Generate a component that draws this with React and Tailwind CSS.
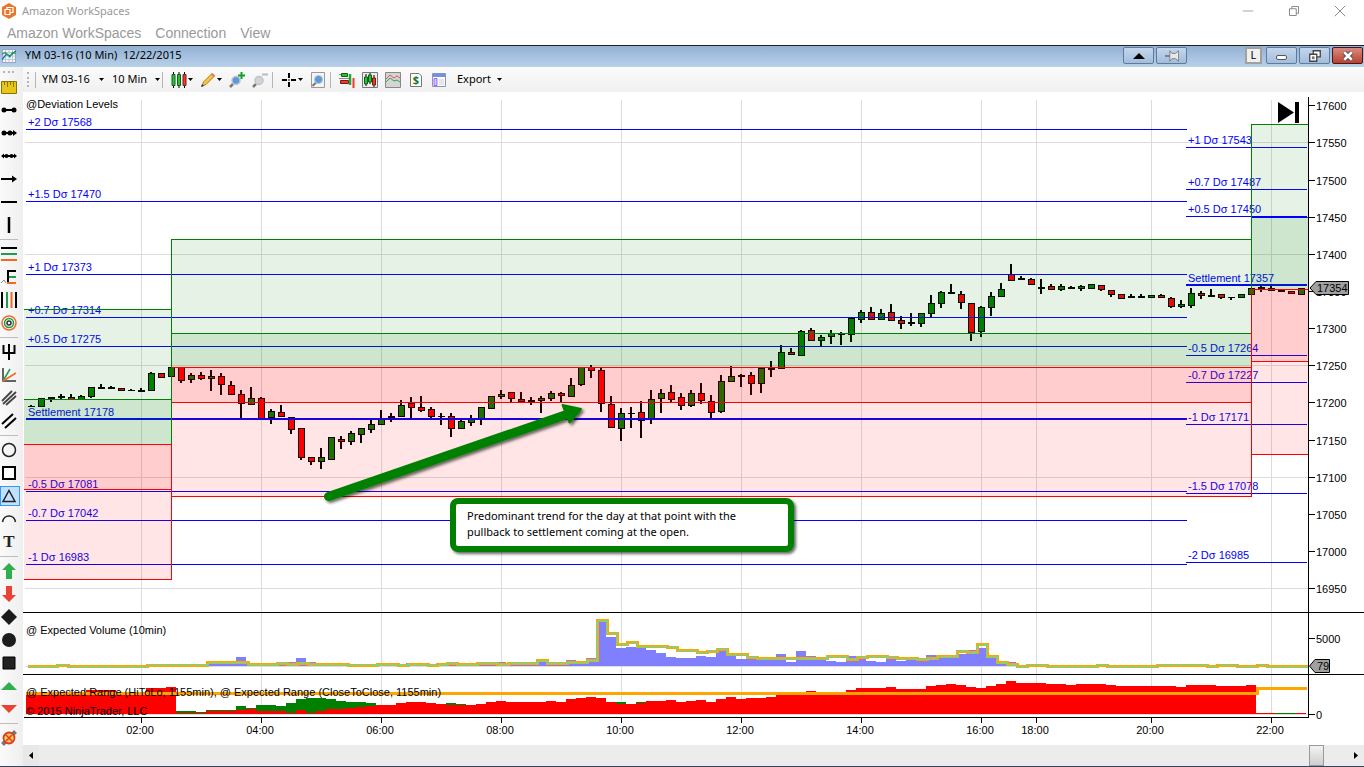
import React, { useState } from 'react';

// [high, body top, body bottom, low, colour], one candle every 10 units
const candles = [
	[405, 406, 407, 407, 'k'], [398, 398, 407, 407, 'g'], [397, 397, 399, 402, 'k'],
	[394, 396, 398, 399, 'k'], [394, 397, 400, 400, 'r'], [395, 396, 400, 400, 'g'],
	[387, 387, 397, 398, 'g'], [384, 387, 389, 389, 'k'], [386, 387, 389, 389, 'k'],
	[388, 388, 391, 391, 'r'], [389, 390, 391, 391, 'k'], [388, 390, 392, 392, 'k'],
	[372, 373, 391, 391, 'g'], [373, 373, 378, 378, 'r'], [367, 367, 377, 377, 'g'],
	[367, 367, 381, 383, 'r'], [373, 375, 380, 383, 'g'], [372, 375, 379, 380, 'r'],
	[370, 376, 379, 391, 'g'], [373, 376, 385, 395, 'r'], [381, 385, 395, 395, 'r'],
	[390, 394, 404, 419, 'r'], [387, 398, 405, 405, 'g'], [397, 398, 419, 419, 'r'],
	[409, 411, 418, 424, 'g'], [405, 412, 417, 417, 'r'], [417, 417, 430, 434, 'r'],
	[428, 428, 458, 460, 'r'], [457, 457, 462, 465, 'r'], [448, 457, 462, 469, 'g'],
	[437, 437, 460, 460, 'g'], [436, 439, 442, 449, 'r'], [431, 433, 442, 445, 'g'],
	[428, 428, 435, 443, 'g'], [420, 424, 430, 433, 'g'], [410, 419, 425, 425, 'g'],
	[413, 416, 418, 422, 'g'], [400, 405, 417, 417, 'g'], [397, 403, 408, 418, 'r'],
	[396, 407, 411, 412, 'r'], [407, 409, 417, 418, 'r'], [413, 416, 417, 425, 'k'],
	[413, 416, 429, 437, 'r'], [418, 421, 429, 429, 'g'], [415, 419, 423, 426, 'g'],
	[407, 407, 419, 425, 'g'], [396, 396, 409, 409, 'g'], [390, 394, 397, 399, 'g'],
	[392, 392, 399, 402, 'r'], [392, 399, 402, 402, 'r'], [397, 400, 402, 405, 'g'],
	[396, 398, 401, 413, 'g'], [391, 393, 399, 401, 'g'], [392, 393, 396, 402, 'r'],
	[378, 385, 397, 397, 'g'], [367, 367, 385, 386, 'g'], [365, 367, 371, 378, 'r'],
	[368, 370, 404, 412, 'r'], [396, 404, 428, 428, 'r'], [408, 413, 429, 441, 'g'],
	[407, 413, 414, 428, 'k'], [401, 412, 421, 438, 'r'], [390, 399, 419, 424, 'g'],
	[389, 393, 399, 413, 'g'], [385, 392, 400, 402, 'r'], [393, 397, 406, 410, 'r'],
	[390, 393, 406, 407, 'g'], [383, 393, 401, 404, 'r'], [395, 401, 413, 419, 'r'],
	[375, 381, 412, 413, 'g'], [366, 376, 382, 382, 'g'], [374, 375, 377, 387, 'k'],
	[372, 375, 384, 395, 'r'], [368, 368, 384, 393, 'g'], [361, 368, 370, 377, 'k'],
	[345, 352, 369, 369, 'g'], [348, 352, 355, 355, 'r'], [330, 331, 356, 356, 'g'],
	[328, 330, 341, 341, 'r'], [335, 337, 341, 346, 'g'], [330, 333, 337, 344, 'g'],
	[332, 333, 335, 345, 'k'], [318, 318, 335, 342, 'g'], [310, 312, 320, 323, 'g'],
	[307, 312, 320, 320, 'r'], [309, 313, 320, 320, 'g'], [304, 312, 321, 321, 'r'],
	[316, 320, 324, 329, 'r'], [313, 322, 324, 326, 'k'], [313, 313, 324, 327, 'g'],
	[295, 303, 314, 317, 'g'], [291, 292, 304, 308, 'g'], [284, 292, 294, 294, 'k'],
	[291, 294, 303, 309, 'r'], [303, 303, 333, 341, 'r'], [306, 307, 332, 337, 'g'],
	[292, 296, 308, 316, 'g'], [283, 289, 297, 297, 'g'], [264, 274, 281, 281, 'r'],
	[276, 278, 280, 280, 'k'], [278, 279, 285, 285, 'r'], [279, 287, 289, 294, 'k'],
	[284, 286, 290, 290, 'r'], [284, 286, 290, 291, 'g'], [286, 287, 289, 289, 'k'],
	[285, 286, 289, 291, 'g'], [284, 284, 289, 289, 'g'], [285, 285, 290, 291, 'r'],
	[290, 290, 295, 297, 'r'], [294, 294, 299, 299, 'r'], [294, 296, 298, 298, 'k'],
	[294, 296, 298, 298, 'k'], [295, 295, 298, 298, 'g'], [294, 295, 298, 298, 'r'],
	[297, 298, 307, 308, 'r'], [300, 304, 307, 308, 'g'], [288, 293, 306, 308, 'g'],
	[291, 293, 296, 299, 'r'], [289, 295, 297, 297, 'k'], [294, 294, 298, 299, 'r'],
	[297, 297, 298, 300, 'k'], [294, 294, 298, 298, 'g'], [288, 288, 295, 295, 'g'],
	[286, 287, 289, 292, 'k'], [286, 288, 291, 291, 'g'], [290, 290, 292, 292, 'k'],
	[291, 291, 294, 294, 'r'], [288, 288, 295, 295, 'g'],
];

// [label, y, thick]
const levelsLeft = [
	['+2 Dσ 17568', 129], ['+1.5 Dσ 17470', 201], ['+1 Dσ 17373', 274],
	['+0.7 Dσ 17314', 317], ['+0.5 Dσ 17275', 346], ['Settlement 17178', 418, true],
	['-0.5 Dσ 17081', 491], ['-0.7 Dσ 17042', 520], ['-1 Dσ 16983', 564],
];
const levelsRight = [
	['+1 Dσ 17543', 147], ['+0.7 Dσ 17487', 189], ['+0.5 Dσ 17450', 216],
	['Settlement 17357', 284, true], ['-0.5 Dσ 17264', 355], ['-0.7 Dσ 17227', 382],
	['-1 Dσ 17171', 424], ['-1.5 Dσ 17078', 493], ['-2 Dσ 16985', 562],
];

const zones = [
	{ x1: 24, x2: 171, top: 309, inTop: 399, mid: 444, inBottom: 489, bottom: 579 },
	{ x1: 171, x2: 1251, top: 239, inTop: 333, mid: 367, inBottom: 402, bottom: 496 },
	{ x1: 1251, x2: 1308, top: 124, inTop: 217, mid: 289, inBottom: 361, bottom: 454 },
];

const times = [
	[141, '02:00'], [261, '04:00'], [381, '06:00'], [501, '08:00'], [621, '10:00'],
	[741, '12:00'], [861, '14:00'], [981, '16:00'], [1036, '18:00'], [1151, '20:00'],
	[1271, '22:00'],
];

const prices = [
	[105, 17600], [142, 17550], [180, 17500], [217, 17450], [254, 17400], [291, 17350],
	[328, 17300], [365, 17250], [402, 17200], [440, 17150], [477, 17100], [514, 17050],
	[551, 17000], [588, 16950],
];

// Step series: [x, y] where each value holds until the next x
const volumeBars = [
	[206, 663], [216, 661], [236, 657], [246, 664], [286, 662], [296, 658], [306, 662],
	[316, 665], [406, 663], [416, 665], [446, 664], [496, 662], [506, 664], [536, 661],
	[546, 664], [566, 660], [576, 662], [586, 658], [596, 622], [606, 637], [616, 648],
	[626, 647], [646, 650], [656, 653], [666, 657], [676, 658], [696, 656], [706, 657],
	[716, 650], [726, 655], [736, 659], [756, 660], [776, 654], [786, 662], [796, 651],
	[806, 656], [816, 660], [826, 661], [836, 662], [846, 656], [856, 659], [866, 661],
	[876, 662], [886, 659], [896, 661], [906, 660], [926, 655], [936, 657], [956, 654],
	[966, 650], [976, 648], [986, 656], [996, 661], [1006, 662], [1016, 665], [1026, 666],
];
const volumeLine = [
	[27, 666], [57, 665], [68, 666], [147, 665], [207, 662], [248, 664], [277, 663],
	[287, 664], [297, 663], [308, 664], [348, 665], [377, 664], [398, 665], [408, 664],
	[428, 665], [437, 664], [447, 663], [457, 664], [477, 663], [497, 664], [508, 663],
	[537, 660], [547, 663], [567, 662], [587, 660], [597, 620], [607, 633], [617, 644],
	[627, 642], [637, 646], [667, 647], [677, 650], [697, 652], [707, 651], [717, 649],
	[727, 654], [747, 657], [757, 658], [827, 656], [847, 659], [857, 657], [867, 656],
	[887, 657], [897, 658], [917, 659], [927, 658], [937, 656], [957, 651], [967, 652],
	[977, 644], [987, 656], [997, 662], [1007, 664], [1017, 666], [1027, 665],
	[1047, 666], [1097, 665], [1107, 666], [1157, 665], [1207, 666], [1217, 665],
	[1237, 666], [1257, 665], [1267, 666],
];
const rangeGreen = [
	[176, 711], [196, 712], [206, 710], [236, 706], [246, 708], [256, 705], [276, 706],
	[286, 703], [296, 699], [306, 698], [326, 699], [336, 701], [346, 702], [366, 703],
	[376, 705], [446, 703], [456, 704], [466, 706], [616, 702], [626, 704], [636, 702],
	[646, 703], [656, 713],
];
const rangeRed = [
	[26, 693], [86, 690], [116, 692], [146, 688], [166, 687], [176, 713], [206, 711],
	[236, 710], [246, 709], [256, 711], [286, 713], [296, 710], [306, 713], [316, 711],
	[326, 709], [346, 708], [356, 707], [366, 706], [376, 705], [396, 703], [406, 702],
	[426, 703], [436, 704], [446, 705], [476, 704], [486, 702], [496, 701], [506, 702],
	[546, 701], [556, 702], [566, 699], [576, 698], [586, 697], [596, 698], [606, 702],
	[616, 704], [636, 703], [646, 701], [666, 700], [676, 702], [686, 701], [696, 700],
	[706, 702], [716, 699], [726, 697], [736, 699], [746, 698], [766, 697], [776, 694],
	[806, 691], [816, 694], [846, 690], [856, 688], [886, 687], [896, 689], [926, 686],
	[936, 685], [946, 684], [956, 685], [966, 687], [976, 688], [986, 686], [996, 684],
	[1006, 681], [1016, 683], [1046, 684], [1066, 685], [1076, 684], [1106, 685],
	[1116, 686], [1176, 687], [1186, 685], [1216, 686], [1246, 685], [1256, 713],
];

const stepPath = (points, end) =>
	points.map(([x, y], i) => `${i ? 'H' + x + 'V' : 'M' + x + ' '}${y}`).join('') + 'H' + end;

const areaPath = (points, end, base) => stepPath(points, end) + `V${base}H${points[0][0]}Z`;

const candleFill = { g: '#008000', r: '#ff0000', k: '#000000' };

const Level = ({ level, x1, x2 }) => {
	const [label, y, thick] = level;
	return (
		<g fill="#0000ff">
			<rect x={x1} y={y} width={x2 - x1} height={thick ? 2 : 1} shapeRendering="crispEdges" />
			<text x={x1 + 2} y={thick ? y - 2 : y - 3}>
				{label}
			</text>
		</g>
	);
};

const Zone = ({ zone }) => {
	const { x1, x2, top, inTop, mid, inBottom, bottom } = zone;
	const w = x2 - x1;
	return (
		<g shapeRendering="crispEdges">
			<g fill="#008000" fillOpacity="0.1">
				<rect x={x1} y={top} width={w} height={mid - top} />
				<rect x={x1} y={inTop} width={w} height={mid - inTop} />
			</g>
			<g fill="#ff0000" fillOpacity="0.1">
				<rect x={x1} y={mid} width={w} height={bottom - mid} />
				<rect x={x1} y={mid} width={w} height={inBottom - mid} />
			</g>
			<g fill="#008000">
				<rect x={x1} y={top} width={w} height="1" />
				<rect x={x1} y={inTop} width={w} height="1" />
			</g>
			<g fill="#ff0000">
				<rect x={x1} y={mid} width={w} height="1" />
				<rect x={x1} y={inBottom} width={w} height="1" />
				<rect x={x1} y={bottom} width={w} height="1" />
			</g>
		</g>
	);
};

const Chart = () => (
	<svg
		viewBox="23 92 1341 653"
		className="block w-full bg-white text-[11px]"
		fontFamily="Liberation Sans, Arial, sans-serif"
		role="img"
		aria-label="YM 03-16 price chart"
	>
		<defs>
			<filter id="shadow" x="-10%" y="-20%" width="120%" height="150%">
				<feDropShadow dx="2" dy="2" stdDeviation="1.5" floodOpacity="0.6" />
			</filter>
		</defs>

		{/* grid */}
		<g fill="#dcdcdc" shapeRendering="crispEdges">
			{times.map(([x]) => (
				<rect key={x} x={x} y="100" width="1" height="614" />
			))}
			{[142, 254, 365, 477, 588].map((y) => (
				<rect key={y} x="25" y={y} width="1283" height="1" />
			))}
			<rect x="25" y="666" width="1283" height="1" />
			<rect x="25" y="714" width="1283" height="1" />
		</g>

		{/* price panel */}
		<text x="26" y="108">
			@Deviation Levels
		</text>
		<g shapeRendering="crispEdges">
			{candles.map(([high, top, bottom, low, color], i) => {
				const x = 31 + i * 10;
				return (
					<g key={x}>
						<rect x={x - 1} y={high} width="2" height={low - high} />
						<rect x={x - 3} y={top} width="7" height={bottom - top} />
						{bottom - top > 2 && (
							<rect
								x={x - 2}
								y={top + 1}
								width="5"
								height={bottom - top - 2}
								fill={candleFill[color]}
							/>
						)}
					</g>
				);
			})}
		</g>
		{levelsLeft.map((level) => (
			<Level key={level[0]} level={level} x1={26} x2={1187} />
		))}
		{levelsRight.map((level) => (
			<Level key={level[0]} level={level} x1={1186} x2={1307} />
		))}
		{zones.map((zone) => (
			<Zone key={zone.x1} zone={zone} />
		))}
		<g shapeRendering="crispEdges">
			<rect x="171" y="239" width="1" height="205" fill="#008000" />
			<rect x="171" y="444" width="1" height="136" fill="#ff0000" />
			<rect x="1251" y="124" width="1" height="243" fill="#008000" />
			<rect x="1251" y="289" width="1" height="208" fill="#ff0000" />
			<rect x="1252" y="216" width="55" height="2" fill="#0000ff" />
		</g>
		<path d="M1278 102L1294 112.500L1278 123ZM1295 102H1299V123H1295Z" />

		{/* volume panel */}
		<g shapeRendering="crispEdges" fill="none">
			<path d={areaPath(volumeBars, 1026, 666)} fill="#8080ff" />
			<g transform="translate(0.5 0.5)">
				<path d={stepPath(volumeLine, 1307)} stroke="#ffa500" strokeWidth="3" />
				<path d={stepPath(volumeLine, 1307)} stroke="#00ffff" strokeDasharray="2 1" />
			</g>
		</g>
		<text x="26" y="634">
			@ Expected Volume (10min)
		</text>

		{/* range panel */}
		<g shapeRendering="crispEdges">
			<path d={areaPath(rangeGreen, 1256, 714)} fill="#008000" />
			<path d={areaPath(rangeRed, 1306, 714)} fill="#ff0000" />
			<rect x="1276" y="713" width="20" height="1" fill="#008000" />
			<path d="M26 693.500H1257.500V688.500H1307" fill="none" stroke="#ffa500" strokeWidth="3" />
		</g>
		<text x="26" y="696">
			@ Expected Range (HiToLo, 1155min), @ Expected Range (CloseToClose, 1155min)
		</text>
		<text x="26" y="715">
			© 2015 NinjaTrader, LLC
		</text>

		{/* axes */}
		<g shapeRendering="crispEdges">
			<rect x="23" y="612" width="1341" height="1" />
			<rect x="23" y="674" width="1341" height="1" />
			<rect x="24" y="717" width="1285" height="1" />
			<rect x="1308" y="97" width="1" height="621" />
			{times.map(([x]) => (
				<rect key={x} x={x} y="717" width="1" height="6" />
			))}
			{prices.map(([y]) => (
				<rect key={y} x="1308" y={y} width="7" height="1" />
			))}
			<rect x="1308" y="638" width="7" height="1" />
			<rect x="1308" y="714" width="7" height="1" />
		</g>
		<g textAnchor="middle">
			{times.map(([x, label]) => (
				<text key={x} x={x - 1} y="734">
					{label}
				</text>
			))}
		</g>
		{prices.map(([y, label]) => (
			<text key={y} x="1316" y={y + 5}>
				{label}
			</text>
		))}
		<text x="1316" y="643">
			5000
		</text>
		<text x="1316" y="719">
			0
		</text>
		<g fill="#a0a0a0" stroke="#000">
			<path d="M1310 288L1316 281.500H1348.500V294.500H1316Z" />
			<path d="M1309.500 666L1315 659.500H1329.500V672.500H1315Z" />
		</g>
		<text x="1317" y="292">
			17354
		</text>
		<text x="1317" y="670">
			79
		</text>

		{/* annotation */}
		<g filter="url(#shadow)">
			<path d="M328.500 496.500L568 414" stroke="#008000" strokeWidth="9" strokeLinecap="round" />
			<path
				d="M562.500 405L581 409L569.500 422.500Z"
				fill="#008000"
				stroke="#008000"
				strokeWidth="2"
				strokeLinejoin="round"
			/>
		</g>
		<rect
			x="453"
			y="501"
			width="338"
			height="48"
			rx="5"
			fill="#fff"
			stroke="#008000"
			strokeWidth="6"
			filter="url(#shadow)"
		/>
		<g fontFamily="Noto Sans, sans-serif">
			<text x="467" y="520">
				Predominant trend for the day at that point with the
			</text>
			<text x="467" y="536">
				pullback to settlement coming at the open.
			</text>
		</g>
	</svg>
);

const Icon = ({ size = 16, children }) => (
	<svg width={size} height={size} viewBox="0 0 16 16" fill="none" className="shrink-0">
		{children}
	</svg>
);

const Caret = () => (
	<svg width="5" height="3" viewBox="0 0 5 3" className="shrink-0">
		<path d="M0 0H5L2.500 3Z" />
	</svg>
);

const orange = '#f26a21';
const green = '#1f9d4d';

const drawingTools = [
	[
		['Ruler', <path d="M.5 2.500H15.500V14.500H.5ZM3.500 3V6M6.500 3V8M9.500 3V6M12.500 3V8" fill="#e6c619" stroke="#8a7400" />],
		['Line', <><path d="M3 8H13" stroke="#000" strokeWidth="2" /><circle cx="3" cy="8" r="2.500" fill="#000" /><circle cx="13" cy="8" r="2.500" fill="#000" /></>],
		['Ray', <><path d="M3 8H15" stroke="#000" strokeWidth="2" /><circle cx="3" cy="8" r="2.500" fill="#000" /><circle cx="9" cy="8" r="2.500" fill="#000" /><path d="M12 5L16 8L12 11Z" fill="#000" /></>],
		['Extended line', <><path d="M1 8H15" stroke="#000" strokeWidth="2" /><circle cx="5.500" cy="8" r="2" fill="#000" /><circle cx="10.500" cy="8" r="2" fill="#000" /><path d="M3 5.500L0 8L3 10.500ZM13 5.500L16 8L13 10.500Z" fill="#000" /></>],
		['Arrow line', <><path d="M0 8H13" stroke="#000" strokeWidth="2" /><path d="M11 4.500L16 8L11 11.500Z" fill="#000" /></>],
		['Horizontal line', <path d="M0 8H16" stroke="#000" strokeWidth="2" />],
		['Vertical line', <path d="M8 0V16" stroke="#000" strokeWidth="2.500" />],
	],
	[
		['Fibonacci retracements', <><path d="M0 2H16" stroke="#000" strokeWidth="2" /><path d="M0 8H16" stroke={green} strokeWidth="2" /><path d="M0 14H16" stroke={orange} strokeWidth="2" /></>],
		['Fibonacci extensions', <><path d="M0 14L3 11L5 14" stroke="#888" /><path d="M15 2H7V14" stroke="#000" strokeWidth="2" /><path d="M8 8H15" stroke={green} strokeWidth="2" /><path d="M6 14H15" stroke={orange} strokeWidth="2" /></>],
		['Fibonacci time extensions', <><path d="M1 0V16M15 0V16" stroke="#000" strokeWidth="2" /><path d="M6 0V16" stroke={green} strokeWidth="2" /><path d="M10.500 0V16" stroke={orange} strokeWidth="2" /></>],
		['Fibonacci circle', <><circle cx="8" cy="8" r="7" stroke={orange} strokeWidth="1.500" /><circle cx="8" cy="8" r="4.500" stroke={green} strokeWidth="1.500" /><circle cx="8" cy="8" r="2" stroke="#333" strokeWidth="1.500" /></>],
	],
	[
		["Andrew's pitchfork", <path d="M2.500 1V9H13.500V1M8 0V16" stroke="#000" strokeWidth="2" />],
		['Gann fan', <><path d="M2 1V14H15" stroke="#333" strokeWidth="1.500" /><path d="M2 14L9 2" stroke={green} strokeWidth="1.500" /><path d="M2 14L15 6" stroke={orange} strokeWidth="1.500" /></>],
		['Regression channel', <path d="M1 11L11 1M2 14L15 2M5 15L15 6" stroke="#444" strokeWidth="1.800" />],
		['Trend channel', <path d="M1 11L12 1M4 15L15 5" stroke="#000" strokeWidth="2" />],
	],
	[
		['Ellipse', <circle cx="8" cy="8" r="6.500" stroke="#222" strokeWidth="1.500" />],
		['Rectangle', <path d="M2 2H14V14H2Z" fill="#fff" stroke="#000" strokeWidth="2" />],
		['Triangle', <path d="M8 2.500L14 13.500H2Z" stroke="#222" strokeWidth="1.500" />],
		['Arc', <path d="M1.500 11C3 3 13 3 14.500 11" stroke="#222" strokeWidth="1.500" />],
	],
	[
		['Arrow up', <path d="M8 0L15 7H11V16H5V7H1Z" fill="#2fae4e" />],
		['Arrow down', <path d="M8 16L15 9H11V0H5V9H1Z" fill="#ea4335" />],
		['Diamond', <path d="M8 0L16 8L8 16L0 8Z" fill="#1c1c1c" />],
		['Dot', <circle cx="8" cy="8" r="7" fill="#1c1c1c" />],
		['Square', <path d="M2 2H14V14H2Z" fill="#222" stroke="#000" />],
		['Triangle up', <path d="M8 4L16 12H0Z" fill="#2fae4e" />],
		['Triangle down', <path d="M0 4H16L8 12Z" fill="#ea4335" />],
	],
	[
		['Remove drawing objects', <><path d="M1.500 14.500L14.500 1.500" stroke="#777" strokeWidth="4" /><circle cx="8" cy="8" r="5.500" fill="#f8d34a" stroke="#e0392b" strokeWidth="1.800" /><path d="M4 4L12 12M5 11L11 5" stroke="#e0392b" strokeWidth="1.500" /></>],
	],
];

const Sidebar = () => {
	const [tool, setTool] = useState('Triangle');

	return (
		<aside className="w-[23px] shrink-0 bg-linear-to-r from-[#fafafa] to-[#efefef]">
			<div className="h-2 pt-1 pl-[3px]">
				<div className="w-[11px] border-t-2 border-dotted border-[#b5b5b5]" />
			</div>
			{drawingTools.map((group, i) => (
				<React.Fragment key={i}>
					{i > 0 && (
						<div className="flex h-1.5 w-[18px] items-center">
							<div className="h-px w-full bg-[#bdbdbd]" />
						</div>
					)}
					{group.map(([name, icon]) => (
						<button
							key={name}
							aria-label={name}
							onClick={() => setTool(name)}
							className="flex h-[23px] w-5 items-center"
						>
							<span
								className={
									name === tool
										? 'flex h-5 w-5 items-center border border-[#3399ff] bg-[#c2e0ff]'
										: 'flex h-5 w-5 items-center pl-px'
								}
							>
								<Icon>{icon}</Icon>
							</span>
						</button>
					))}
					{i === 3 && (
						<button
							aria-label="Text"
							onClick={() => setTool('Text')}
							className="flex h-[23px] w-[18px] items-center justify-center font-['Liberation_Serif',serif] text-[17px] font-bold text-[#222]"
						>
							T
						</button>
					)}
				</React.Fragment>
			))}
		</aside>
	);
};

const Separator = () => <div className="h-4 w-px bg-[#b5b5b5]" />;

const ToolButton = ({ label, menu, children }) => (
	<button aria-label={label} className="flex items-center gap-px">
		<Icon>{children}</Icon>
		{menu && <Caret />}
	</button>
);

const Lens = ({ color = '#5b9bd5' }) => (
	<>
		<path d="M1 15L4 12" stroke="#777" strokeWidth="2.500" />
		<circle cx="7" cy="8.500" r="4" fill={color} stroke="#b8c4d0" strokeWidth="1.500" />
	</>
);

const Toolbar = () => (
	<div className="flex h-[25px] items-center rounded-bl-md bg-linear-to-b from-[#fbfbfb] to-[#f0f0f0] pl-1 font-['Noto_Sans',sans-serif] text-[11px] text-black">
		<div className="h-[15px] border-l-2 border-dotted border-[#b5b5b5]" />
		<div className="ml-1.5">
			<Separator />
		</div>
		<label className="ml-1.5 flex w-[70px] items-center">
			<select aria-label="Instrument" className="w-[57px] appearance-none">
				<option>YM 03-16</option>
			</select>
			<Caret />
		</label>
		<label className="flex w-[50px] items-center">
			<select aria-label="Interval" className="w-[43px] appearance-none">
				<option>10 Min</option>
			</select>
			<Caret />
		</label>
		<Separator />
		<div className="ml-2 flex items-center gap-[7px]">
			<ToolButton label="Chart style" menu>
				<path d="M2.500 0V16M8 0V16M13.500 0V16" stroke="#000" />
				<path d="M1 2.500H4V13.500H1ZM6.500 2.500H9.500V13.500H6.500Z" fill="#22c534" stroke="#145c1c" />
				<path d="M12 2.500H15V13.500H12Z" fill="#f03a2e" stroke="#7a1a14" />
			</ToolButton>
			<ToolButton label="Drawing tools" menu>
				<path d="M2 14L3.500 10L12 1.500L14.500 4L6 12.500Z" fill="#f5c542" stroke="#b07a1a" />
				<path d="M11 2.500L12.500 1L15 3.500L13.500 5Z" fill="#e77a5c" />
				<path d="M1 15L2 12L4 14Z" fill="#333" />
			</ToolButton>
			<ToolButton label="Zoom in">
				<Lens />
				<path d="M12.500 0V7M9 3.500H16" stroke="#13a02c" strokeWidth="2" />
			</ToolButton>
			<ToolButton label="Zoom out">
				<Lens color="#d4d4d4" />
				<path d="M10 2.500H16" stroke="#bbb" strokeWidth="2" />
			</ToolButton>
		</div>
		<div className="ml-1">
			<Separator />
		</div>
		<div className="mr-1 ml-2 flex items-center gap-[7px]">
			<ToolButton label="Cursor" menu>
				<path d="M8 1V6M8 10V15M1 8H6M10 8H15M7.500 8H8.500" stroke="#000" strokeWidth="2" />
			</ToolButton>
			<ToolButton label="Zoom frame">
				<path d="M1.500 .5H14.500V15.500H1.500Z" fill="#f4f4f4" stroke="#999" />
				<path d="M2.500 14L6 10.500" stroke="#777" strokeWidth="2" />
				<circle cx="8.500" cy="7.500" r="4" fill="#5b9bd5" stroke="#b8c4d0" />
			</ToolButton>
		</div>
		<Separator />
		<div className="ml-2 flex items-center gap-[7px]">
			<ToolButton label="Chart trader">
				<path d="M2.500 1.500H8.500V4.500H2.500Z" fill="#22c534" stroke="#145c1c" />
				<path d="M1.500 8.500H9.500V11.500H1.500Z" fill="#f03a2e" stroke="#7a1a14" />
				<path d="M0 2.500H2M0 6.500H10" stroke="#888" />
				<path d="M11 2V13" stroke="#22a534" strokeWidth="2.500" />
				<path d="M14.500 6V16" stroke="#f03a2e" strokeWidth="2" />
			</ToolButton>
			<ToolButton label="Data series">
				<path d="M.5 .5H15.500V15.500H.5Z" fill="#eee" stroke="#777" />
				<path d="M4 2V14M8 1V12M12 3V15" stroke="#000" />
				<path d="M2.500 5H5.500V12H2.500ZM6.500 3H9.500V10H6.500Z" fill="#22c534" stroke="#145c1c" />
				<path d="M10.500 6H13.500V13H10.500Z" fill="#f03a2e" stroke="#7a1a14" />
			</ToolButton>
			<ToolButton label="Indicators">
				<path d="M.5 .5H15.500V15.500H.5Z" fill="#d4d4d4" stroke="#888" />
				<path d="M1 7L5 3L9 6L12 4L15 6" stroke="#e05a50" />
				<path d="M1 10L5 6L9 9L12 8L15 10" stroke="#35a05a" />
			</ToolButton>
			<ToolButton label="Strategies">
				<path d="M2.500 1.500H11L13.500 4V14.500H2.500Z" fill="#fff" stroke="#777" />
				<text x="8" y="12" textAnchor="middle" fontSize="11" fontWeight="700" fill="#18762e">
					$
				</text>
			</ToolButton>
			<ToolButton label="Properties">
				<path d="M1.500 1.500H14.500V14.500H1.500Z" fill="#fff" stroke="#8a94b8" />
				<path d="M2 2H14V5H2Z" fill="#7090e0" />
				<path d="M3 6.500H6V13.500H3Z" fill="#d9c7ff" stroke="#9566ff" />
				<path d="M8 8H13M8 10H13M8 12H13" stroke="#ccc" />
			</ToolButton>
		</div>
		<button className="ml-2.5 flex items-center gap-1.5">
			Export
			<Caret />
		</button>
	</div>
);

const frameButton =
	'flex h-[17px] w-[31px] items-center justify-center rounded-xs border border-[#5f7a9c] bg-linear-to-b from-[#c3d7ed] to-[#a2bddb]';

const ChartTitleBar = () => (
	<div className="flex h-[21px] items-center bg-linear-to-b from-[#92b1d3] to-[#b9d1ea] pr-px pb-0.5 pl-0.5 font-['Noto_Sans',sans-serif] text-[11px] text-black">
		<Icon size={14}>
			<path d="M.5 .5H15.500V15.500H.5Z" fill="#f3f6fb" stroke="#8a9bbd" />
			<path d="M1 4H15M1 8H15M1 12H15M4 1V15M8 1V15M12 1V15" stroke="#b6c4dd" />
			<path d="M0 12L5 6L9 8L16 2" stroke="#1f5fd0" strokeWidth="1.500" />
			<path d="M0 6L4 4L9 9L12 4L16 5" stroke="#25a040" strokeWidth="1.500" />
		</Icon>
		<span className="ml-[9px] grow whitespace-pre">YM 03-16 (10 Min)  12/22/2015</span>
		<div className="flex items-center gap-0.5">
			<button aria-label="Collapse" className={frameButton}>
				<svg width="12" height="6" viewBox="0 0 12 6">
					<path d="M0 6L6 0L12 6Z" />
				</svg>
			</button>
			<button aria-label="Pin" className={frameButton}>
				<Icon size={14}>
					<path d="M0 8H6" stroke="#777" strokeWidth="2" />
					<path d="M5.500 2V14L8 11H12L15.500 14V2L12 5H8Z" fill="#e8e8e8" stroke="#777" />
				</Icon>
			</button>
			<button
				aria-label="Link"
				className="mr-0.5 ml-[56px] flex h-[17px] w-[17px] items-center justify-center border-2 border-[#a0a0a0] bg-[#f0f0f0]"
			>
				L
			</button>
			<button aria-label="Minimize chart" className={frameButton}>
				<span className="mt-1 h-[5px] w-[11px] rounded-xs border border-[#555] bg-white" />
			</button>
			<button aria-label="Restore chart" className={frameButton}>
				<Icon size={14}>
					<path d="M6 2H14V9H6Z" fill="#fff" stroke="#444" strokeWidth="1.500" />
					<path d="M2 6H10V14H2Z" fill="#fff" stroke="#444" strokeWidth="1.500" />
					<path d="M5 9H7V11H5Z" stroke="#444" />
				</Icon>
			</button>
			<button
				aria-label="Close chart"
				className="flex h-[17px] w-[31px] items-center justify-center rounded-xs border border-[#4a1420] bg-linear-to-b from-[#d98a80] to-[#b8402c]"
			>
				<Icon size={12}>
					<path d="M3 3L13 13M13 3L3 13" stroke="#444" strokeWidth="6" />
					<path d="M3 3L13 13M13 3L3 13" stroke="#fff" strokeWidth="3.500" />
				</Icon>
			</button>
		</div>
	</div>
);

const WindowHeader = () => (
	<header className="border-b border-[#222] bg-white text-[#999]">
		<div className="flex h-[22px] items-center pl-px font-['Noto_Sans',sans-serif] text-[11px]">
			<Icon>
				<path d="M8 0L15 4V12L8 16L1 12V4Z" fill="#e8762d" />
				<path d="M6 4.500H12V9.500H6Z" stroke="#fff" strokeWidth="1.200" />
				<path d="M4 6.500H9V11.500H4Z" fill="#e8762d" stroke="#fff" strokeWidth="1.200" />
			</Icon>
			<h1 className="ml-[5px] grow">Amazon WorkSpaces</h1>
			<div className="mr-[18px] flex gap-[34px] text-[#888]">
				<button aria-label="Minimize">
					<Icon size={12}>
						<path d="M1 8H15" stroke="currentColor" />
					</Icon>
				</button>
				<button aria-label="Restore">
					<Icon size={12}>
						<path d="M2 5H11V14H2ZM5 5V2H14V11H11" stroke="currentColor" strokeWidth="1.300" />
					</Icon>
				</button>
				<button aria-label="Close">
					<Icon size={12}>
						<path d="M1 1L15 15M15 1L1 15" stroke="currentColor" strokeWidth="1.300" />
					</Icon>
				</button>
			</div>
		</div>
		<nav className="flex h-[23px] items-center gap-3.5 pl-[7px] font-['Liberation_Sans',Arial,sans-serif] text-[14px]">
			<button>Amazon WorkSpaces</button>
			<button>Connection</button>
			<button>View</button>
		</nav>
	</header>
);

const ScrollBar = () => (
	<div className="flex h-[21px] items-stretch bg-[#ececec]">
		<button aria-label="Scroll left" className="flex w-4 items-center justify-center bg-[#e8e8e8]">
			<svg width="4" height="7" viewBox="0 0 4 7">
				<path d="M4 0V7L0 3.500Z" />
			</svg>
		</button>
		<div className="flex grow justify-end">
			<button
				aria-label="Scroll position"
				className="mr-6 w-[15px] border border-[#999] bg-linear-to-b from-[#f2f2f2] to-[#cfcfcf]"
			/>
		</div>
		<button aria-label="Scroll right" className="flex w-4 items-center justify-center bg-[#ececec]">
			<svg width="4" height="7" viewBox="0 0 4 7">
				<path d="M0 0V7L4 3.500Z" />
			</svg>
		</button>
	</div>
);

const App = () => {
	return (
		<div className="bg-[#ececec]">
			<WindowHeader />
			<ChartTitleBar />
			<div className="flex border-b border-[#3b4252]">
				<Sidebar />
				<main className="min-w-0 grow">
					<Toolbar />
					<Chart />
					<ScrollBar />
				</main>
			</div>
		</div>
	);
};

export default App;
